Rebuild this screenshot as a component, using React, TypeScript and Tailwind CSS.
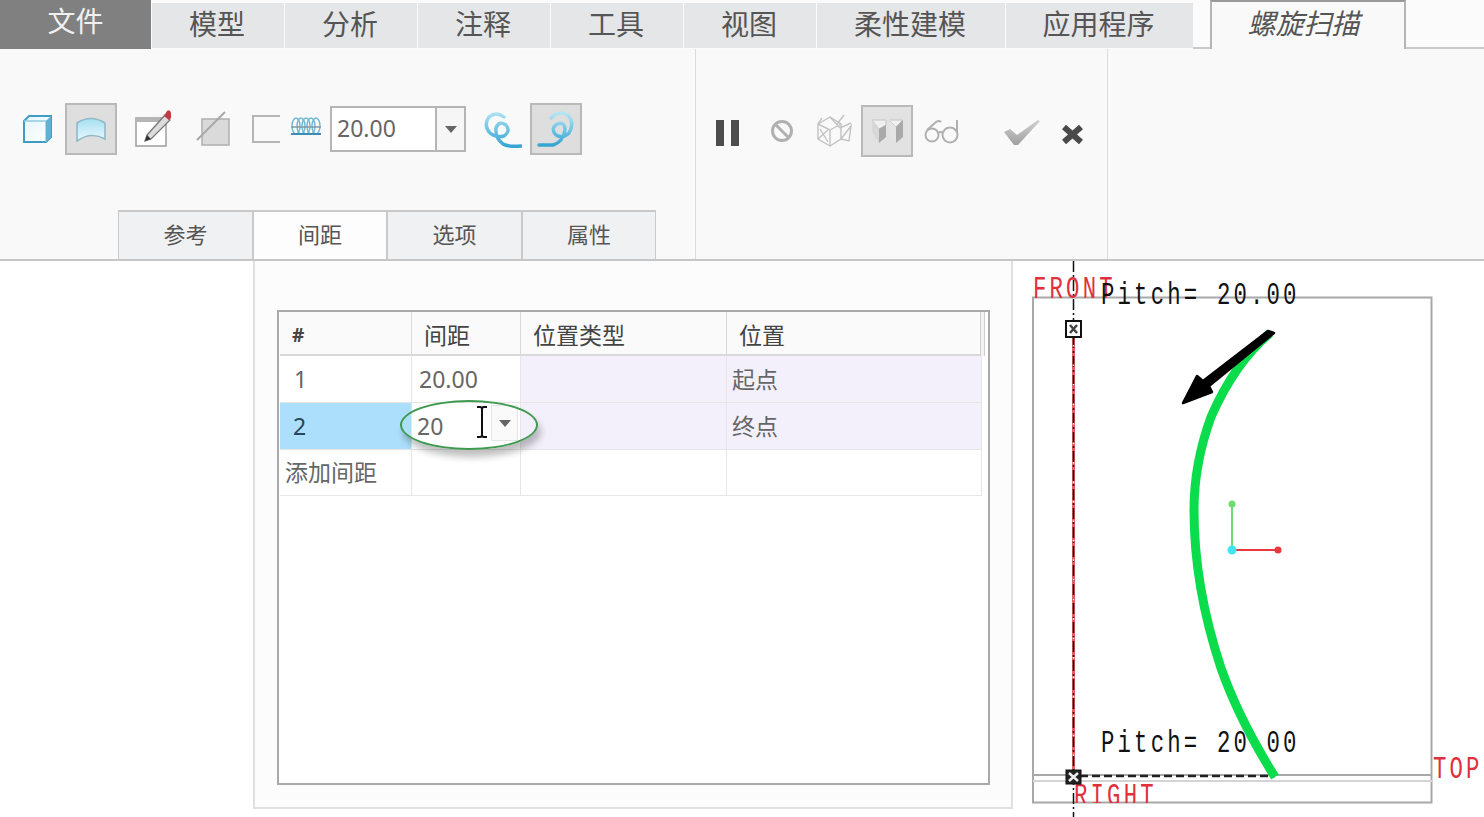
import React from "react";

const FONT = { fontFamily: '"Noto Sans", "Noto Sans CJK SC", sans-serif' };

const topTabs = [
  { label: "模型", width: "w-[132px]" },
  { label: "分析", width: "w-[132px]" },
  { label: "注释", width: "w-[132px]" },
  { label: "工具", width: "w-[132px]" },
  { label: "视图", width: "w-[132px]" },
  { label: "柔性建模", width: "w-[188px]" },
  { label: "应用程序", width: "w-[187px]" },
];

const subTabs = [
  { label: "参考", width: "w-[135px]" },
  { label: "间距", width: "w-[134px]", active: true },
  { label: "选项", width: "w-[135px]" },
  { label: "属性", width: "w-[134px]" },
];

const SolidIcon = () => (
  <svg width="29" height="28" viewBox="0 0 29 28">
    <defs>
      <linearGradient id="solidFace" x1="0" y1="0" x2="1" y2="1">
        <stop offset="0" stopColor="#e4f6fc" />
        <stop offset="1" stopColor="#ffffff" />
      </linearGradient>
    </defs>
    <path d="M1 6 L6 1 H28 V22 L23 27 H1 Z" fill="url(#solidFace)" stroke="#3f9cc4" strokeWidth="2" />
    <path d="M23 27 V6 H1" fill="none" stroke="#8fcbe2" strokeWidth="1.4" />
    <path d="M23 6 L28 1 V22 L23 27 Z" fill="#5fb2d4" />
  </svg>
);

const SurfaceIcon = () => (
  <svg width="32" height="28" viewBox="0 0 32 28">
    <defs>
      <linearGradient id="surfaceFace" x1="0" y1="0" x2="0" y2="1">
        <stop offset="0" stopColor="#a6e0f2" />
        <stop offset="1" stopColor="#e9f8fc" />
      </linearGradient>
    </defs>
    <path d="M2 8 Q16 -1 30 8 L30 24 Q16 16 2 26 Z" fill="url(#surfaceFace)" stroke="#92b9c6" strokeWidth="1.6" />
  </svg>
);

const SketchIcon = () => (
  <svg width="37" height="38" viewBox="0 0 37 38">
    <rect x="1" y="9" width="30" height="28" fill="#fff" stroke="#a3a3a3" strokeWidth="1.6" />
    <rect x="1" y="9" width="30" height="4" fill="#b5b5b5" />
    <path d="M12 26 L30 6 L35 11 L16 30 L10 32 Z" fill="#dcdcdc" stroke="#777" strokeWidth="1.3" />
    <path d="M29 7 L32 2 Q35 0 36 4 L36 9 L34 11 Z" fill="#c23a44" />
    <path d="M10 32 L12 26 L16 30 Z" fill="#333" />
  </svg>
);

const SlashBoxIcon = () => (
  <svg width="35" height="36" viewBox="0 0 35 36">
    <rect x="6" y="8" width="27" height="26" fill="#dadada" stroke="#b2b2b2" strokeWidth="1.6" />
    <path d="M1 29 L29 1" stroke="#a8a8a8" strokeWidth="2" />
  </svg>
);

const CoilIcon = () => (
  <svg width="32" height="22" viewBox="0 0 32 22">
    <g fill="none" stroke="#6fb7d6" strokeWidth="1.4">
      <ellipse cx="6" cy="10" rx="4" ry="8" />
      <ellipse cx="11" cy="10" rx="4" ry="8" />
      <ellipse cx="16" cy="10" rx="4" ry="8" />
      <ellipse cx="21" cy="10" rx="4" ry="8" />
      <ellipse cx="26" cy="10" rx="4" ry="8" />
    </g>
    <path d="M1 11 H31" stroke="#7f99a8" strokeWidth="1.5" />
    <path d="M1 18 H31" stroke="#3c8fb4" strokeWidth="2" />
  </svg>
);

const HelixLeftIcon = () => (
  <svg width="38" height="38" viewBox="0 0 38 38">
    <defs>
      <linearGradient id="helixLeft" x1="0" y1="0" x2="0" y2="1">
        <stop offset="0" stopColor="#a8e0f2" />
        <stop offset="1" stopColor="#35a5d4" />
      </linearGradient>
    </defs>
    <path
      d="M20 6 Q12 0 5 6 Q-1 14 6 22 Q12 27 20 25 Q27 20 22 14 Q15 9 12 17 Q11 27 19 33 Q24 36 37 35"
      fill="none"
      stroke="url(#helixLeft)"
      strokeWidth="3.4"
      strokeLinecap="round"
    />
  </svg>
);

const HelixRightIcon = () => (
  <svg width="38" height="38" viewBox="0 0 38 38">
    <defs>
      <linearGradient id="helixRight" x1="0" y1="0" x2="0" y2="1">
        <stop offset="0" stopColor="#b5e5f4" />
        <stop offset="1" stopColor="#35a5d4" />
      </linearGradient>
    </defs>
    <path
      d="M14 8 Q22 0 31 5 Q38 13 32 23 Q26 29 19 25 Q13 19 20 14 Q28 11 28 20 Q26 32 16 35 L2 35"
      fill="none"
      stroke="url(#helixRight)"
      strokeWidth="3.4"
      strokeLinecap="round"
    />
  </svg>
);

const NoIcon = () => (
  <svg width="24" height="24" viewBox="0 0 24 24">
    <circle cx="12" cy="12" r="9.5" fill="none" stroke="#b0b0b0" strokeWidth="3" />
    <path d="M5.5 5.5 L18.5 18.5" stroke="#b0b0b0" strokeWidth="3" />
  </svg>
);

const WireCubeIcon = () => (
  <svg width="36" height="34" viewBox="0 0 36 34">
    <g fill="none" stroke="#c2c2c2" strokeWidth="1.4">
      <path d="M2 10 L14 3 L25 10 L25 25 L14 32 L2 25 Z" />
      <path d="M2 10 L14 16 L25 10 M14 16 V32" />
      <path d="M14 3 L24 14 L35 9 M28 1 L21 10 M25 25 L35 12 L33 27 L25 25" />
      <path d="M6 4 L2 10 M4 15 L12 28 M2 25 L12 16" />
    </g>
  </svg>
);

const ShadedIcon = () => (
  <svg width="33" height="28" viewBox="0 0 33 28">
    <path d="M1 3 H15 V8 L8 12 Z" fill="#f0f0f0" stroke="#c4c4c4" />
    <path d="M1 3 L8 12 V26 L1 15 Z" fill="#d8d8d8" />
    <path d="M8 12 L15 8 V20 L8 26 Z" fill="#a9a9a9" />
    <path d="M18 3 H32 L25 10 Z" fill="#f0f0f0" stroke="#c4c4c4" />
    <path d="M18 3 L25 10 V26 L18 18 Z" fill="#e4e4e4" />
    <path d="M25 10 L32 3 V20 L25 26 Z" fill="#a9a9a9" />
  </svg>
);

const GlassesIcon = () => (
  <svg width="37" height="25" viewBox="0 0 37 25">
    <g fill="none" stroke="#b0b0b0" strokeWidth="2">
      <circle cx="8" cy="16" r="6.5" />
      <circle cx="26" cy="16" r="7.5" />
      <path d="M14 14 Q17 12 19 14 M3 11 L12 3 Q15 1 17 3 M33 14 V1" />
    </g>
  </svg>
);

const CheckIcon = () => (
  <svg width="37" height="27" viewBox="0 0 37 27">
    <defs>
      <linearGradient id="checkFill" x1="0" y1="0" x2="0" y2="1">
        <stop offset="0" stopColor="#d0d0d0" />
        <stop offset="1" stopColor="#a0a0a0" />
      </linearGradient>
    </defs>
    <path d="M1 13 L7 10 L14 16 L35 1 L37 2 L15 26 L11 26 Z" fill="url(#checkFill)" />
  </svg>
);

const CloseIcon = () => (
  <svg width="23" height="19" viewBox="0 0 23 19">
    <path d="M3 2 L20 17 M20 2 L3 17" stroke="#4a4a4a" strokeWidth="6" />
  </svg>
);

const ToolButton = ({ children, className = "" }: { children: React.ReactNode; className?: string }) => (
  <div className={`flex h-[52px] w-[52px] shrink-0 items-center justify-center border-2 border-[#b9b9b9] bg-[#dedede] ${className}`}>
    {children}
  </div>
);

const SpinBox = () => (
  <div className="ml-[8px] flex h-[46px] w-[136px] border-2 border-[#b5b5b5] bg-white">
    <span className="flex-1 pl-[5px] text-[23px] leading-[41px] text-[#666]">20.00</span>
    <span className="flex w-[29px] items-center justify-center border-l-2 border-[#b5b5b5] bg-[#f6f6f6]">
      <span className="h-0 w-0 border-x-[6px] border-t-[7px] border-x-transparent border-t-[#666]" />
    </span>
  </div>
);

const Ribbon = () => (
  <div className="flex h-[212px] border-b-2 border-[#c6c6c6] bg-[#f9f9f9]">
    <div className="flex w-[696px] flex-col border-r border-[#dcdcdc]">
      <div className="mt-[54px] flex h-[52px] items-center pl-[23px]">
        <SolidIcon />
        <ToolButton className="ml-[13px]">
          <SurfaceIcon />
        </ToolButton>
        <div className="ml-[18px] mb-[2px]">
          <SketchIcon />
        </div>
        <div className="ml-[24px]">
          <SlashBoxIcon />
        </div>
        <div className="ml-[21px] h-[28px] w-[28px] border-y-2 border-l-2 border-[#b5b5b5]" />
        <div className="ml-[10px] mb-[4px]">
          <CoilIcon />
        </div>
        <SpinBox />
        <div className="ml-[18px] mt-[2px]">
          <HelixLeftIcon />
        </div>
        <ToolButton className="ml-[8px]">
          <HelixRightIcon />
        </ToolButton>
      </div>
      <div className="mt-auto flex pl-[118px]">
        {subTabs.map((tab) => (
          <div
            key={tab.label}
            className={`flex h-[49px] items-center justify-center border-x border-t-2 border-[#c9c9c9] pb-[3px] text-[22px] text-[#555] ${tab.width} ${tab.active ? "bg-[#fdfdfd]" : "bg-[#f0f1f2]"}`}
          >
            {tab.label}
          </div>
        ))}
      </div>
    </div>

    <div className="flex w-[412px] items-center border-r border-[#dcdcdc] pb-[46px] pl-[20px]">
      <div className="mt-[4px] h-[26px] w-[23px] border-x-[8px] border-[#4d4d4d]" />
      <div className="ml-[31px]">
        <NoIcon />
      </div>
      <div className="ml-[22px]">
        <WireCubeIcon />
      </div>
      <ToolButton className="ml-[9px] bg-[#e2e2e2]">
        <ShadedIcon />
      </ToolButton>
      <div className="ml-[11px]">
        <GlassesIcon />
      </div>
      <div className="ml-[42px] mt-[2px]">
        <CheckIcon />
      </div>
      <div className="ml-[21px] mt-[6px]">
        <CloseIcon />
      </div>
    </div>
    <div className="flex-1" />
  </div>
);

const TopBar = () => (
  <div className="flex h-[49px] bg-[#fbfbfb]">
    <div className="flex h-[49px] w-[151px] items-center justify-center bg-[#808080] pb-[8px] text-[28px] text-[#f0f0f0]">
      文件
    </div>
    <div className="flex gap-[1px] pl-[1px] pt-[3px]">
      {topTabs.map((tab) => (
        <div
          key={tab.label}
          className={`flex h-[45px] items-center justify-center bg-[#e5e6e8] pb-[4px] pr-[2px] text-[28px] text-[#555] ${tab.width}`}
        >
          {tab.label}
        </div>
      ))}
    </div>
    <div className="h-full w-[17px] border-b-2 border-[#c9c9c9]" />
    <div className="z-10 flex h-[49px] w-[196px] items-center justify-center border-x-2 border-t-2 border-[#b5b5b5] border-t-[#9a9a9a] bg-[#f9f9f9] pb-[5px] pr-[9px] text-[28px] italic text-[#555]">
      螺旋扫描
    </div>
    <div className="h-full flex-1 border-b-2 border-[#c9c9c9]" />
  </div>
);

const cellBase = "flex items-center border-r border-b border-[#e6e6e6] text-[23px] text-[#666]";

const SpacingTable = () => (
  <div className="relative ml-[22px] mt-[49px] h-[475px] w-[713px] border-2 border-[#a9a9a9] bg-white pl-[1px]">
    <div className="grid w-[702px] grid-cols-[132px_109px_206px_255px] grid-rows-[44px_47px_47px_46px]">
      {["#", "间距", "位置类型", "位置"].map((head, i) => (
        <div
          key={head}
          className={`flex items-center border-r border-b-2 border-[#d9d9d9] bg-[#fafafa] pl-[12px] pt-[4px] text-[#444] ${i === 0 ? "text-[19px] font-bold" : "text-[23px]"}`}
        >
          {head}
        </div>
      ))}

      <div className={`${cellBase} pl-[14px]`}>1</div>
      <div className={`${cellBase} pl-[7px]`}>20.00</div>
      <div className={`${cellBase} bg-[#f3f0fb]`} />
      <div className={`${cellBase} bg-[#f3f0fb] pl-[5px]`}>起点</div>

      <div className={`${cellBase} bg-[#acdffb] pl-[13px] text-[#27475c]`}>2</div>
      <div className={`${cellBase} pl-[5px]`}>20</div>
      <div className={`${cellBase} bg-[#f3f0fb]`} />
      <div className={`${cellBase} bg-[#f3f0fb] pl-[5px]`}>终点</div>

      <div className={`${cellBase} pl-[5px]`}>添加间距</div>
      <div className={cellBase} />
      <div className={cellBase} />
      <div className={cellBase} />
    </div>
    <div className="absolute right-[3px] top-[0px] h-[44px] w-[5px] border-x border-[#cfcfcf] bg-[#f2f2f2]" />

    {/* dropdown + cursor + callout sit over the row */}
    <div className="absolute left-[212px] top-[93px] flex h-[36px] w-[27px] items-center justify-center border border-[#e6e6e6] bg-[#fafafa]">
      <span className="h-0 w-0 border-x-[6px] border-t-[7px] border-x-transparent border-t-[#666]" />
    </div>
    <svg className="absolute left-[196px] top-[94px]" width="14" height="32" viewBox="0 0 14 32">
      <path d="M2 1 H5 Q7 1 7 3 V29 Q7 31 5 31 H2 M12 1 H9 Q7 1 7 3 M7 29 Q7 31 9 31 H12" fill="none" stroke="#111" strokeWidth="2" />
    </svg>
    <div className="absolute left-[121px] top-[88px] h-[50px] w-[138px] rounded-[50%] border-2 border-[#3f9a4f] shadow-[3px_7px_7px_rgba(0,0,0,0.25)]" />
  </div>
);

// cad lettering: squeezed mono glyphs with a wide pitch, same for datum names and dimensions
const CadText = ({ x, y, color, children }: { x: number; y: number; color: string; children: string }) => (
  <text
    transform={`translate(${x} ${y}) scale(0.72 1)`}
    fontFamily='"Liberation Mono", monospace'
    fontSize="31"
    letterSpacing="4.4"
    fill={color}
    xmlSpace="preserve"
  >
    {children}
  </text>
);

const CadCanvas = () => (
  <div className="relative flex-1 bg-white">
    <svg className="absolute inset-0" width="471" height="556" viewBox="1013 261 471 556">
      <rect x="1033" y="297.5" width="398.5" height="505" fill="none" stroke="#a8a8a8" strokeWidth="2" />
      <path d="M1033 775 H1432" stroke="#a8a8a8" strokeWidth="2" />
      <path d="M1033 781 H1432" stroke="#d4d4d4" strokeWidth="2" />

      <path d="M1073.5 320 V775" stroke="#e0606a" strokeWidth="3" />
      <path d="M1073.5 261 V817" stroke="#111" strokeWidth="1.5" strokeDasharray="11 3 2 3" />
      <path d="M1073.5 345 V770" stroke="#fff" strokeWidth="1.5" strokeDasharray="1.5 18" />

      <CadText x={1033} y={298} color="#e0303c">FRONT</CadText>
      <CadText x={1101} y={304} color="#111">{"Pitch= 20.00"}</CadText>
      <CadText x={1101} y={752} color="#111">{"Pitch= 20.00"}</CadText>
      <CadText x={1433} y={778} color="#e0303c">TOP</CadText>
      <clipPath id="rightClip">
        <rect x="1070" y="776" width="100" height="27" />
      </clipPath>
      <g clipPath="url(#rightClip)">
        <CadText x={1074} y={805} color="#e0303c">RIGHT</CadText>
      </g>

      <path d="M1080 776 H1275" stroke="#222" strokeWidth="2.5" strokeDasharray="8 4" />

      <path
        d="M1270 333 C1250 350 1228 378 1211 417 C1199 450 1194 480 1194 510 C1194 570 1205 620 1221 668 C1235 708 1255 745 1275 777"
        fill="none"
        stroke="#0bdc4c"
        strokeWidth="9"
      />

      <path d="M1274 333 L1209 386 L1212 392 L1183 403 L1197 376 L1203 381 L1268 331 Z" fill="#000" stroke="#000" strokeWidth="2.5" strokeLinejoin="round" />

      <path d="M1232 504 V550" stroke="#6fdc6f" strokeWidth="2" />
      <path d="M1232 550 H1278" stroke="#e8383c" strokeWidth="2" />
      <circle cx="1232" cy="504" r="3.5" fill="#6fdc6f" />
      <circle cx="1278" cy="550" r="3.5" fill="#e8383c" />
      <circle cx="1232" cy="550" r="4.5" fill="#3fe6f2" />

      <rect x="1066" y="321" width="15" height="16" fill="#fff" stroke="#111" strokeWidth="2" />
      <path d="M1070 325 L1077 333 M1077 325 L1070 333" stroke="#444" strokeWidth="2.5" />
      <rect x="1066" y="770" width="15" height="14" fill="#222" stroke="#111" strokeWidth="1" />
      <path d="M1069 773 L1078 781 M1078 773 L1069 781" stroke="#eee" strokeWidth="2.5" />
    </svg>
  </div>
);

export default function App() {
  return (
    <div className="flex h-[817px] w-[1484px] flex-col overflow-hidden bg-white" style={FONT}>
      <TopBar />
      <Ribbon />
      <div className="flex flex-1">
        <div className="w-[253px] bg-white" />
        <div className="h-[548px] w-[760px] border-x-2 border-b-2 border-[#e0e0e0] bg-[#fcfcfc]">
          <SpacingTable />
        </div>
        <CadCanvas />
      </div>
    </div>
  );
}
